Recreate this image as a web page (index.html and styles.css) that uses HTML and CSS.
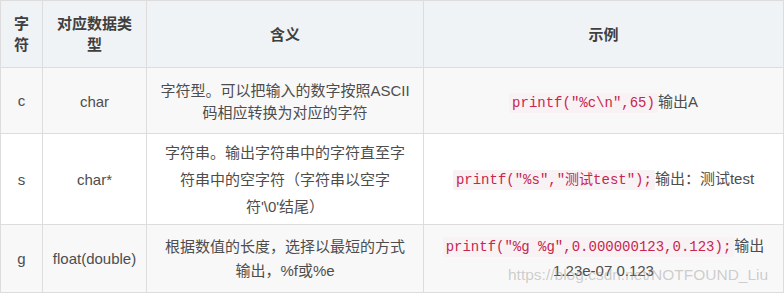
FILE: index.html
```html
<!DOCTYPE html>
<html>
<head>
<meta charset="utf-8">
<title>printf 格式字符</title>
<link rel="stylesheet" href="styles.css">
</head>
<body>
<div class="wrap">
  <table class="fmt">
    <colgroup>
      <col class="c1">
      <col class="c2">
      <col class="c3">
      <col class="c4">
    </colgroup>
    <thead>
      <tr class="head">
        <th>字符</th>
        <th>对应数据类型</th>
        <th>含义</th>
        <th>示例</th>
      </tr>
    </thead>
    <tbody>
      <tr class="r1">
        <td>c</td>
        <td>char</td>
        <td class="desc">字符型。可以把输入的数字按照ASCII<br>码相应转换为对应的字符</td>
        <td><code>printf("%c\n",65)</code>输出A</td>
      </tr>
      <tr class="r2">
        <td>s</td>
        <td>char*</td>
        <td class="desc">字符串。输出字符串中的字符直至字<br>符串中的空字符（字符串以空字<br>符'\0'结尾）</td>
        <td><code>printf("%s","测试test");</code>输出：测试test</td>
      </tr>
      <tr class="r3">
        <td>g</td>
        <td>float(double)</td>
        <td class="desc">根据数值的长度，选择以最短的方式<br>输出，%f或%e</td>
        <td><code>printf("%g %g",0.000000123,0.123);</code>输出<br>1.23e-07 0.123</td>
      </tr>
    </tbody>
  </table>
  <span class="mark">https://blog.csdn.net/NOTFOUND_Liu</span>
</div>
</body>
</html>
```

FILE: styles.css
```css
html,body {
  margin: 0;
  padding: 0;
  background: #fff;
}
.wrap {
  position: relative;
  width: 784px;
  height: 294px;
  overflow: hidden;
}
.fmt {
  border-collapse: collapse;
  table-layout: fixed;
  width: 783px;
  font-family: "Liberation Sans", "Noto Sans CJK SC", sans-serif;
  font-size: 15px;
  color: #4d4d4d;
}
.c1 { width: 42px; }
.c2 { width: 104px; }
.c3 { width: 277px; }
.c4 { width: 360px; }
.fmt th,.fmt td {
  border: 1px solid #dddddd;
  text-align: center;
  vertical-align: middle;
  padding: 0 8px;
}
.fmt th {
  background: #eff3f5;
  color: #3f3f3f;
  font-weight: bold;
  line-height: 21px;
  height: 66px;
}
.fmt th:first-child {
  padding: 0 13px;
}
.fmt td:first-child {
  padding: 0;
}
.r1 td,.r3 td {
  background: #f8f8f8;
}
.r1 td {
  height: 62px;
  line-height: 22px;
  padding-top: 3px;
}
.r2 td {
  height: 90px;
  line-height: 27px;
}
.r3 td {
  height: 67px;
  line-height: 24px;
}
code {
  font-family: "Liberation Mono", "DejaVu Sans Mono", "Noto Sans CJK SC", monospace;
  font-size: 14px;
  color: #c7254e;
  background: #f9f2f4;
  padding: 2px 3px;
  border-radius: 2px;
}
.mark {
  position: absolute;
  left: 508px;
  top: 266px;
  font-family: "Liberation Sans", sans-serif;
  font-size: 15.5px;
  color: rgba(150,150,150,0.45);
  white-space: nowrap;
}
```
